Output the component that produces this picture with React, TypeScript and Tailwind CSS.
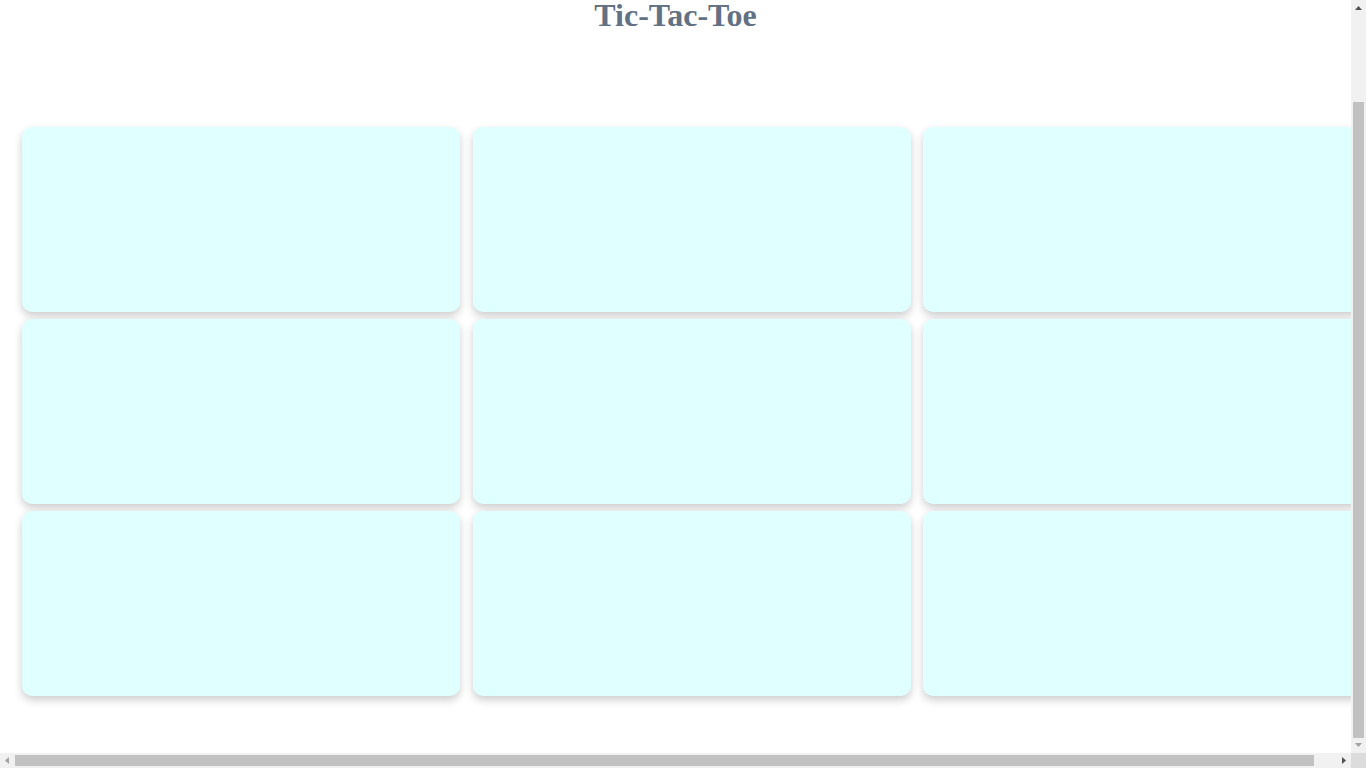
import React from "react";

//Empty board, nine cells
const cells = Array.from({ length: 9 }, (_, i) => i);

const Cell = () => {
  return (
    <div className="h-[185px] rounded-[10px] bg-[#e0ffff] shadow-[0_4px_8px_rgba(0,0,0,0.2)]"></div>
  );
};

//Window scrollbars as they show in the screenshot
const Scrollbars = () => {
  return (
    <>
      <div className="fixed top-0 right-0 flex h-[753px] w-[15px] flex-col items-center bg-[#f1f1f1]">
        <svg width="15" height="15" viewBox="0 0 15 15" className="shrink-0">
          <polygon points="4,10 11,10 7.5,6" fill="#505050" />
        </svg>
        <div className="mt-[87px] h-[636px] w-[11px] bg-[#c1c1c1]"></div>
        <svg width="15" height="15" viewBox="0 0 15 15" className="shrink-0">
          <polygon points="4,5 11,5 7.5,9" fill="#a3a3a3" />
        </svg>
      </div>
      <div className="fixed bottom-0 left-0 flex h-[15px] w-[1351px] items-center bg-[#f1f1f1]">
        <svg width="15" height="15" viewBox="0 0 15 15" className="shrink-0">
          <polygon points="9,4 9,11 5,7.5" fill="#a3a3a3" />
        </svg>
        <div className="h-[11px] w-[1299px] bg-[#c1c1c1]"></div>
        <div className="flex-1"></div>
        <svg width="15" height="15" viewBox="0 0 15 15" className="shrink-0">
          <polygon points="6,4 6,11 10,7.5" fill="#505050" />
        </svg>
      </div>
      <div className="fixed right-0 bottom-0 h-[15px] w-[15px] bg-[#dcdcdc]"></div>
    </>
  );
};

export default function App() {
  return (
    <div className="h-screen overflow-hidden bg-white font-['Liberation_Serif',serif]">
      <h1 className="pr-[15px] text-center text-[32px] leading-[30px] font-bold text-[#627184]">
        Tic-Tac-Toe
      </h1>
      <div className="mt-[97px] grid w-max grid-cols-[repeat(3,438px)] gap-x-[12.5px] gap-y-[7px] pl-[22px] pr-[14px]">
        {cells.map((c) => (
          <Cell key={c} />
        ))}
      </div>
      <Scrollbars />
    </div>
  );
}
